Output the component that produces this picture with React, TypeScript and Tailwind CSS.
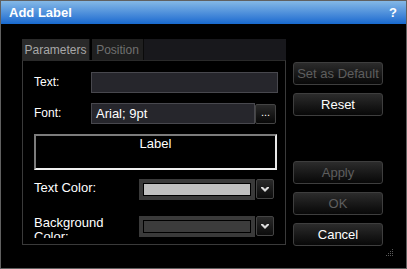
const font = { fontFamily: '"Liberation Sans", Arial, sans-serif' };

function DlgButton({ label, disabled, className = '' }: { label: string; disabled?: boolean; className?: string }) {
  return (
    <div
      className={`h-[23px] w-[90px] rounded-[3px] border border-[#3e3e3e] bg-gradient-to-b from-[#2c2c2c] to-[#080808] flex items-center justify-center text-[13px] ${
        disabled ? 'text-[#5e5e5e]' : 'text-white'
      } ${className}`}
    >
      {label}
    </div>
  );
}

function ColorPicker({ color }: { color: string }) {
  return (
    <div className="flex h-[21px]">
      <div className="w-[116px] h-full bg-[#3a3a3a] p-[4px]">
        <div className="w-full h-full border border-black" style={{ background: color }} />
      </div>
      <div className="w-[18px] h-[20px] ml-[1px] rounded-[2px] border border-[#444] bg-gradient-to-b from-[#2a2a2a] to-[#0c0c0c] flex items-center justify-center">
        <svg width="8" height="5" viewBox="0 0 8 5">
          <path d="M0 0h2l2 2 2-2h2v1L4 5 0 1z" fill="#dcdcdc" />
        </svg>
      </div>
    </div>
  );
}

export default function App() {
  return (
    <div className="relative w-[407px] h-[269px] bg-black border border-[#606060] flex flex-col overflow-hidden" style={font}>
      {/* Title bar */}
      <div className="h-[23px] bg-gradient-to-b from-[#84b8e6] to-[#1669cf] flex items-center justify-between px-[8px] text-white font-bold text-[13px]">
        <span>Add Label</span>
        <span className="mr-[1px]">?</span>
      </div>

      <div className="flex pl-[21px] pt-[15px]">
        {/* Tabs + panel */}
        <div className="w-[264px] flex flex-col">
          <div className="h-[21px] flex bg-[#18181c]">
            <div className="w-[68px] bg-[#2a2a2a] border-r border-[#111] text-[#a8a8a8] text-[12px] flex items-center justify-center">
              Parameters
            </div>
            <div className="w-[2px] bg-black" />
            <div className="w-[52px] bg-[#1f1f1f] border-r border-[#0a0a0a] text-[#707070] text-[12px] flex items-center justify-center">
              Position
            </div>
            <div className="flex-1" />
          </div>
          <div className="h-[185px] border border-[#3a3a3a] border-t-[#2a2a2a] pl-[11px] pr-[7px] pt-[11px] text-white text-[12px] overflow-hidden">
            <div className="flex items-center h-[21px]">
              <span className="w-[57px] -mt-[2px]">Text:</span>
              <div className="flex-1 h-full bg-[#26262c] border border-[#48484e]" />
            </div>
            <div className="flex items-center h-[21px] mt-[10px]">
              <span className="w-[57px] -mt-[2px]">Font:</span>
              <div className="w-[164px] h-full bg-[#26262c] border border-[#48484e] flex items-center pl-[4px] text-[13px]">
                Arial; 9pt
              </div>
              <div className="w-[21px] h-[20px] rounded-[2px] border border-[#444] bg-gradient-to-b from-[#2a2a2a] to-[#080808] flex items-center justify-center text-[11px] leading-none pb-[3px]">
                ...
              </div>
              <div className="flex-1" />
            </div>
            <div className="mt-[10px] h-[36px] w-[243px] border-2 border-t-[#7c7c7c] border-l-[#7c7c7c] border-r-[#e8e8e8] border-b-[#f0f0f0] flex justify-center text-[13px] leading-[15px]">
              Label
            </div>
            <div className="flex items-center mt-[9px]">
              <span className="w-[105px] text-[13px] -mt-[3px]">Text Color:</span>
              <ColorPicker color="#c0c0c0" />
            </div>
            <div className="flex items-start mt-[16px]">
              <div className="w-[105px] h-[22px] overflow-hidden text-[13px] leading-[14px]">
                Background
                <br />
                Color:
              </div>
              <ColorPicker color="#3c3c3c" />
            </div>
          </div>
        </div>

        {/* Buttons */}
        <div className="ml-[7px] pt-[23px] flex flex-col">
          <DlgButton label="Set as Default" disabled />
          <DlgButton label="Reset" className="mt-[8px]" />
          <DlgButton label="Apply" disabled className="mt-[45px]" />
          <DlgButton label="OK" disabled className="mt-[8px]" />
          <DlgButton label="Cancel" className="mt-[8px]" />
        </div>
      </div>

      {/* Resize grip */}
      <svg className="absolute right-[13px] bottom-[12px]" width="7" height="7" viewBox="0 0 7 7">
        {[
          [6, 0],
          [4, 2],
          [6, 2],
          [2, 4],
          [4, 4],
          [6, 4],
          [0, 6],
          [2, 6],
          [4, 6],
          [6, 6],
        ].map(([x, y], i) => (
          <rect key={i} x={x} y={y} width="1" height="1" fill="#5a5a5a" />
        ))}
      </svg>
    </div>
  );
}
